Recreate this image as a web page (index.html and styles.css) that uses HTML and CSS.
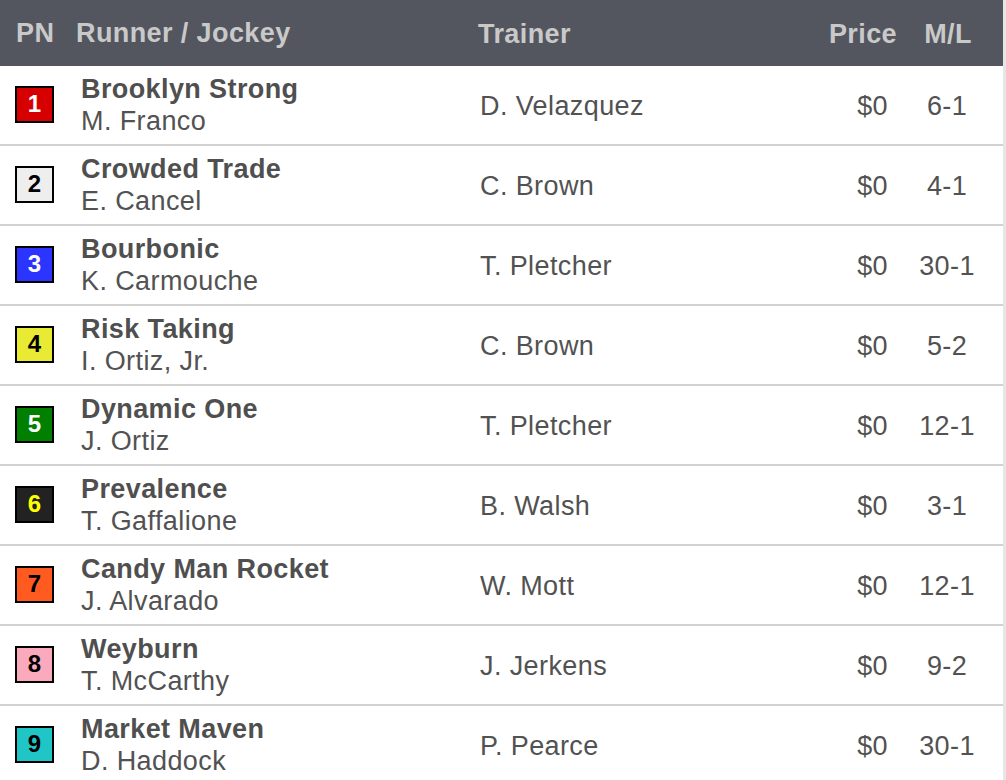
FILE: index.html
```html
<!DOCTYPE html>
<html>
<head>
<meta charset="utf-8">
<link rel="stylesheet" href="styles.css">
</head>
<body>
<div class="page">
  <div class="table">
    <div class="row head">
      <div class="c pn">PN</div>
      <div class="c runner">Runner / Jockey</div>
      <div class="c trainer">Trainer</div>
      <div class="c price">Price</div>
      <div class="c ml">M/L</div>
    </div>
    <div class="row">
      <div class="c pn"><span class="badge b1">1</span></div>
      <div class="c runner"><div class="name">Brooklyn Strong</div><div class="jockey">M. Franco</div></div>
      <div class="c trainer">D. Velazquez</div>
      <div class="c price">$0</div>
      <div class="c ml">6-1</div>
    </div>
    <div class="row">
      <div class="c pn"><span class="badge b2">2</span></div>
      <div class="c runner"><div class="name">Crowded Trade</div><div class="jockey">E. Cancel</div></div>
      <div class="c trainer">C. Brown</div>
      <div class="c price">$0</div>
      <div class="c ml">4-1</div>
    </div>
    <div class="row">
      <div class="c pn"><span class="badge b3">3</span></div>
      <div class="c runner"><div class="name">Bourbonic</div><div class="jockey">K. Carmouche</div></div>
      <div class="c trainer">T. Pletcher</div>
      <div class="c price">$0</div>
      <div class="c ml">30-1</div>
    </div>
    <div class="row">
      <div class="c pn"><span class="badge b4">4</span></div>
      <div class="c runner"><div class="name">Risk Taking</div><div class="jockey">I. Ortiz, Jr.</div></div>
      <div class="c trainer">C. Brown</div>
      <div class="c price">$0</div>
      <div class="c ml">5-2</div>
    </div>
    <div class="row">
      <div class="c pn"><span class="badge b5">5</span></div>
      <div class="c runner"><div class="name">Dynamic One</div><div class="jockey">J. Ortiz</div></div>
      <div class="c trainer">T. Pletcher</div>
      <div class="c price">$0</div>
      <div class="c ml">12-1</div>
    </div>
    <div class="row">
      <div class="c pn"><span class="badge b6">6</span></div>
      <div class="c runner"><div class="name">Prevalence</div><div class="jockey">T. Gaffalione</div></div>
      <div class="c trainer">B. Walsh</div>
      <div class="c price">$0</div>
      <div class="c ml">3-1</div>
    </div>
    <div class="row">
      <div class="c pn"><span class="badge b7">7</span></div>
      <div class="c runner"><div class="name">Candy Man Rocket</div><div class="jockey">J. Alvarado</div></div>
      <div class="c trainer">W. Mott</div>
      <div class="c price">$0</div>
      <div class="c ml">12-1</div>
    </div>
    <div class="row">
      <div class="c pn"><span class="badge b8">8</span></div>
      <div class="c runner"><div class="name">Weyburn</div><div class="jockey">T. McCarthy</div></div>
      <div class="c trainer">J. Jerkens</div>
      <div class="c price">$0</div>
      <div class="c ml">9-2</div>
    </div>
    <div class="row">
      <div class="c pn"><span class="badge b9">9</span></div>
      <div class="c runner"><div class="name">Market Maven</div><div class="jockey">D. Haddock</div></div>
      <div class="c trainer">P. Pearce</div>
      <div class="c price">$0</div>
      <div class="c ml">30-1</div>
    </div>
  </div>
  <div class="gutter"></div>
</div>
</body>
</html>
```

FILE: styles.css
```css
html, body {
  margin: 0;
  padding: 0;
  background: #ffffff;
}
body {
  font-family: "Liberation Sans", Arial, Helvetica, sans-serif;
  font-size: 27px;
  letter-spacing: 0.4px;
  color: #525252;
}
.page {
  display: flex;
  width: 1006px;
  height: 780px;
  overflow: hidden;
}
.table {
  width: 1003px;
  flex: none;
}
.gutter {
  width: 3px;
  background: #e6e6e6;
}
.row {
  display: grid;
  grid-template-columns: 70px 402px 328px 105px 98px;
  height: 78px;
  border-bottom: 2px solid #d2d2d2;
  box-sizing: content-box;
}
.row.head {
  height: 66px;
  border-bottom: none;
  background: #54565f;
  color: #c9c9c9;
  font-weight: bold;
}
.c {
  display: flex;
  align-items: center;
  line-height: 32px;
  white-space: nowrap;
}
.head .pn { padding-left: 16px; }
.head .runner { padding-left: 6px; }
.head .trainer { padding-left: 6px; }
.head .price { justify-content: flex-end; padding-right: 8px; }
.head .ml { justify-content: center; padding-right: 12px; }

.pn { padding-left: 15px; }
.runner {
  padding-left: 11px;
  flex-direction: column;
  align-items: flex-start;
  justify-content: center;
}
.trainer { padding-left: 8px; padding-top: 1px; }
.price { justify-content: flex-end; padding-right: 17px; padding-top: 1px; }
.ml { justify-content: center; padding-right: 14px; padding-top: 1px; }
.name {
  font-weight: bold;
  color: #4f4f4f;
}
.jockey {
  color: #525252;
}
.badge {
  box-sizing: border-box;
  width: 39px;
  height: 37px;
  border: 2px solid #000;
  display: flex;
  align-items: center;
  justify-content: center;
  font-weight: bold;
  font-size: 24px;
  letter-spacing: 0;
  line-height: 1;
  margin-top: -2px;
}
.b1 { background: #d60000; color: #ffffff; }
.b2 { background: #eeeeee; color: #000000; }
.b3 { background: #2b35ff; color: #ffffff; }
.b4 { background: #e8ea33; color: #000000; }
.b5 { background: #007f00; color: #ffffff; }
.b6 { background: #222222; color: #ffff00; }
.b7 { background: #ff5a1f; color: #000000; }
.b8 { background: #fba9bd; color: #000000; }
.b9 { background: #20c5c5; color: #000000; }
```
